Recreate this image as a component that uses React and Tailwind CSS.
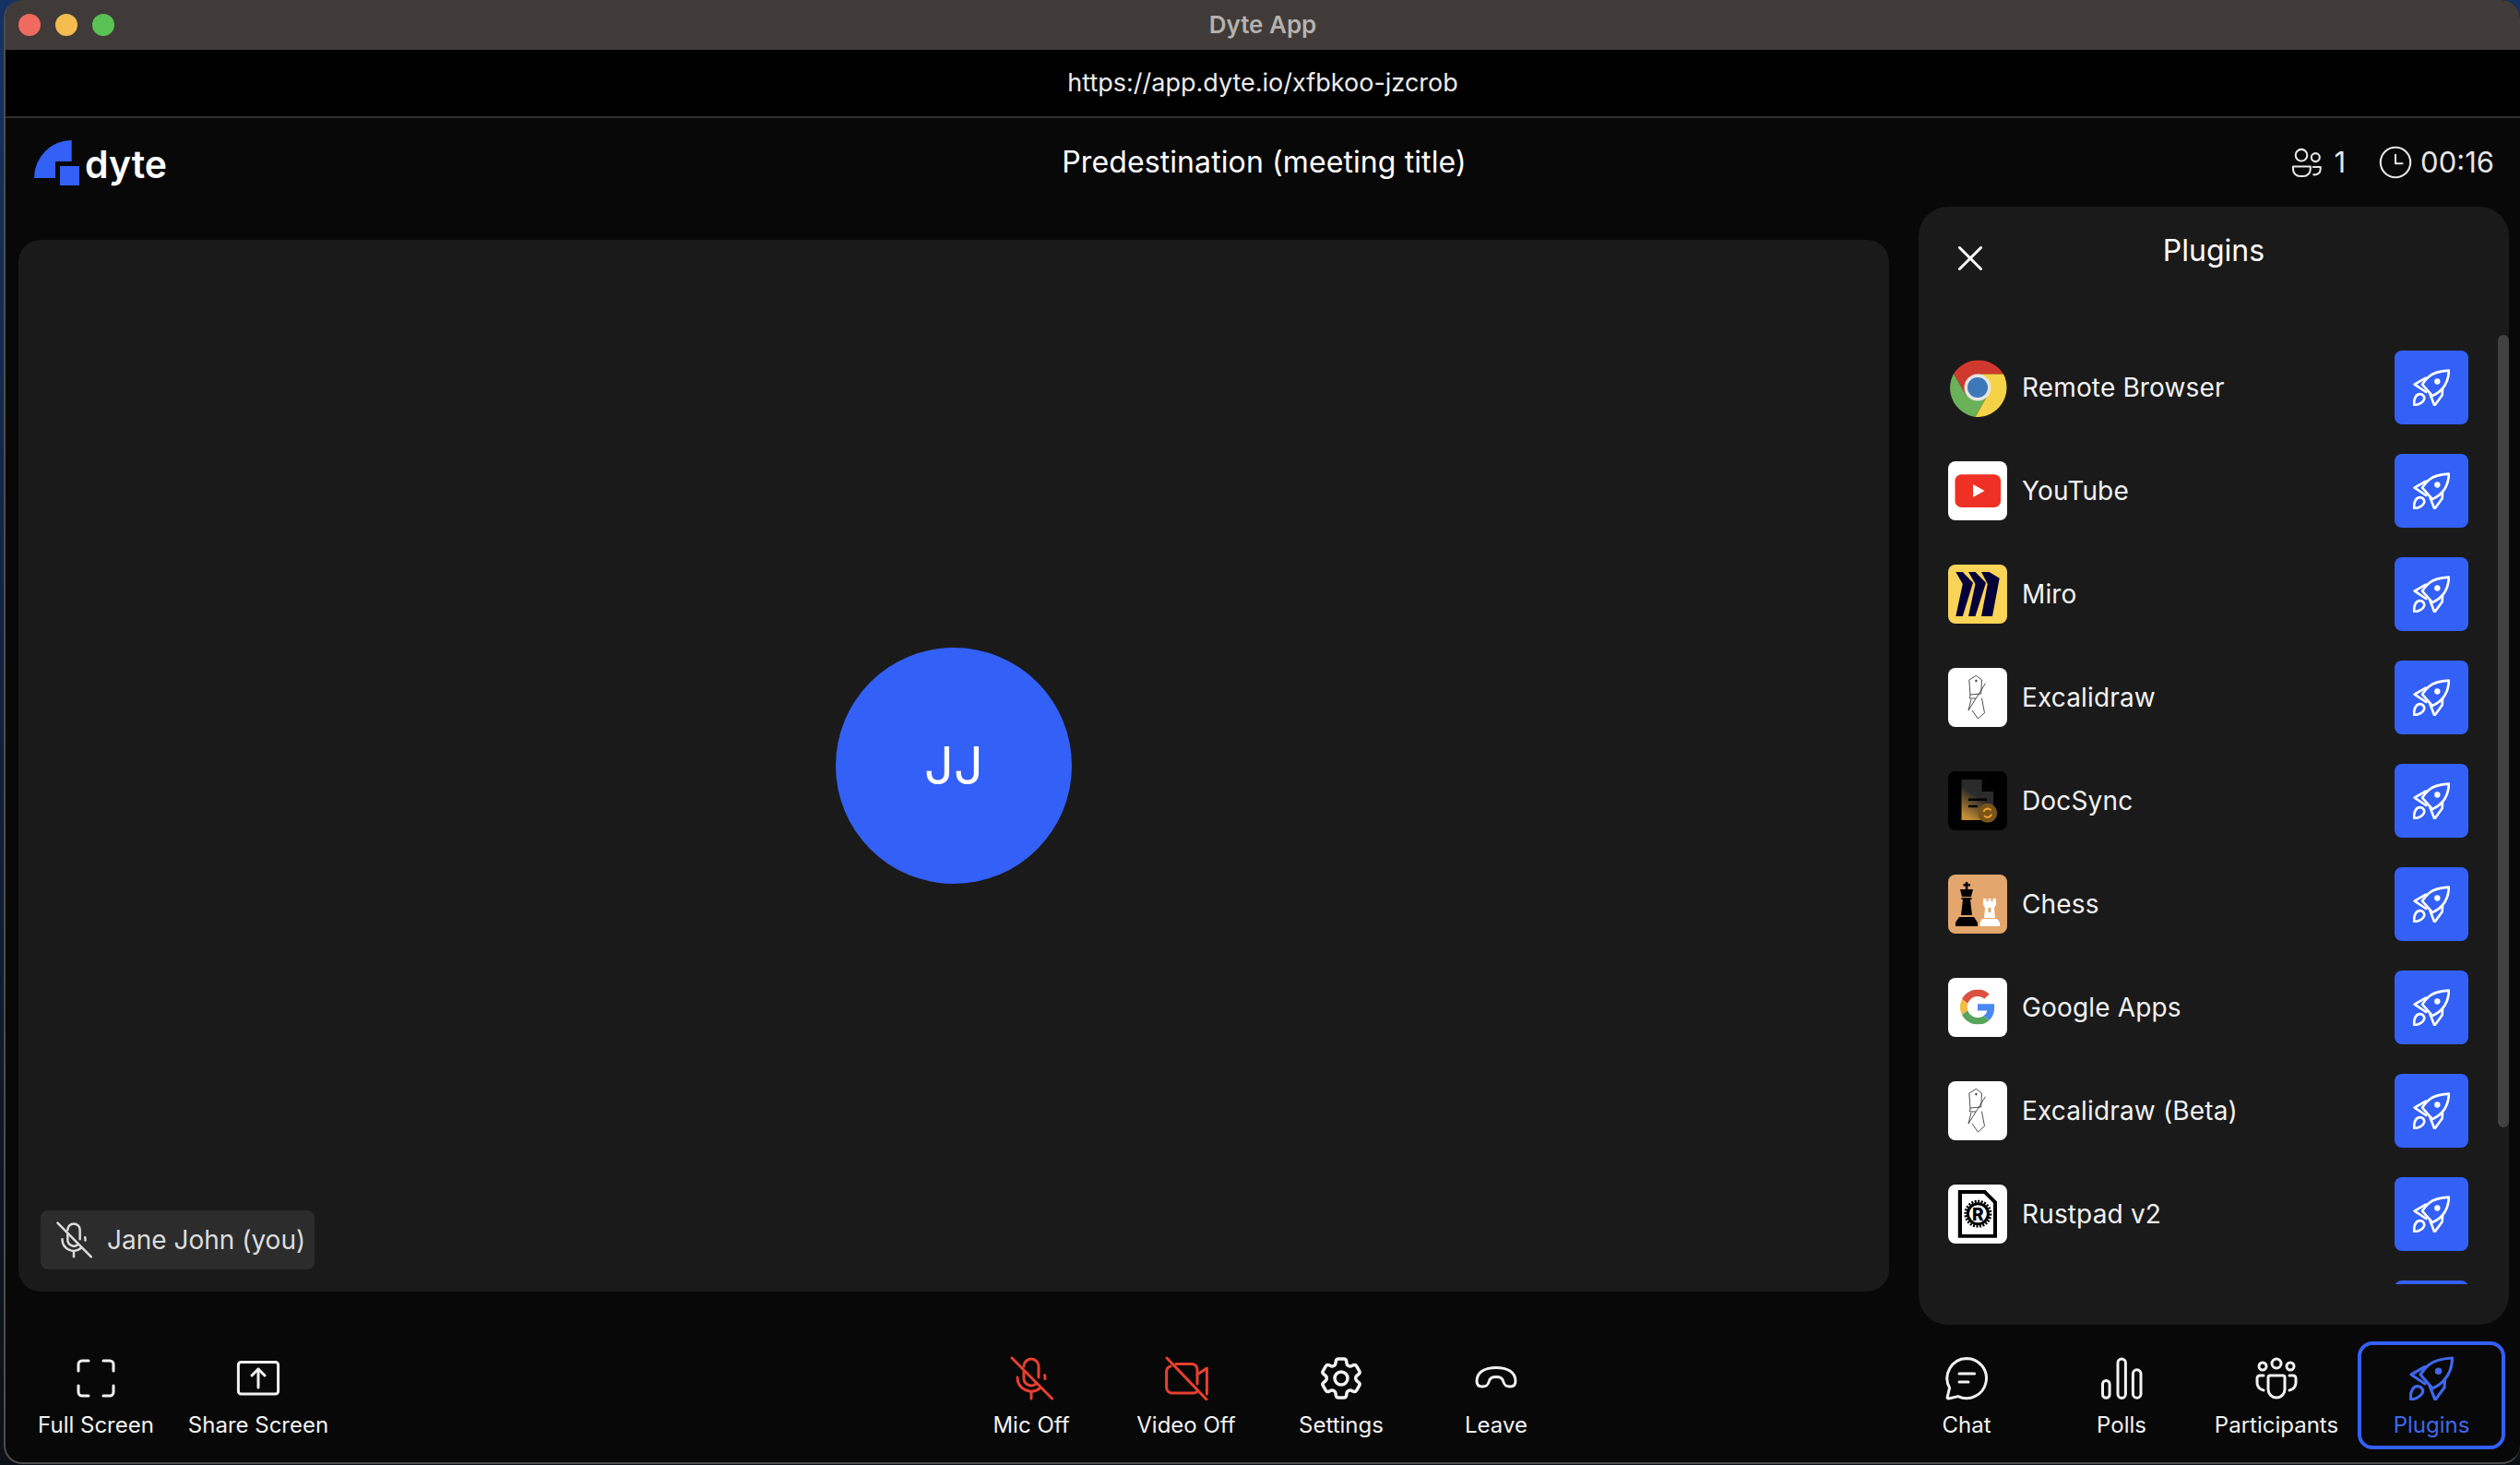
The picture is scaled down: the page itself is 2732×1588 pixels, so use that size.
import { HiOutlineCog6Tooth } from "react-icons/hi2";

const Icon = ({ children, size = 48, sw = 1.5, className = "" }) => (
  <svg
    width={size}
    height={size}
    viewBox="0 0 24 24"
    fill="none"
    stroke="currentColor"
    strokeWidth={sw}
    strokeLinecap="round"
    strokeLinejoin="round"
    className={`shrink-0 ${className}`}
  >
    {children}
  </svg>
);

const Rocket = ({ size = 48 }) => (
  <Icon size={size} sw={1.6}>
    <path d="M23.300 1C18 1.300 13.500 2.300 10.500 4.800C8.500 6.500 7 8.500 6 10L12.600 17.500C15 16.300 17.500 14.800 19 12.800C22 9.500 23.200 5.500 23.300 1Z" />
    <path d="M8.300 5.800L1 10L8.500 15" />
    <path d="M19.200 13L19 17L14 23.800L11 16" />
    <path d="M0.800 23.500C0.300 19.500 2 16.300 4.500 16.300C6.300 16.300 7.800 18 7.200 19.800C6.300 21.800 3.500 23.200 0.800 23.500Z" />
    <circle cx="15.800" cy="8.100" r="1.900" fill="currentColor" stroke="none" />
  </Icon>
);

const MicOff = ({ size = 48 }) => (
  <Icon size={size}>
    <path d="M8 5.500a4 4 0 0 1 8 0V11.500" />
    <path d="M8 8V12a4 4 0 0 0 6.500 3.100" />
    <path d="M4.500 11.500a7.500 7.500 0 0 0 12.300 5.800" />
    <path d="M19.500 12.300a7.500 7.500 0 0 0-.2-2" />
    <path d="M12 19.500V23" />
    <path d="M1.500 1L23.300 23" />
  </Icon>
);

const VideoOff = () => (
  <Icon>
    <path d="M3.500 5.500A3 3 0 0 0 1.300 8.300V17A3 3 0 0 0 4.300 20H16A2.500 2.500 0 0 0 17.800 19.300" />
    <path d="M6.500 4.200H15A3 3 0 0 1 18 7.200V15" />
    <path d="M18 10L23.200 6.500V20.500" />
    <path d="M1.500 1L23 23.500" />
  </Icon>
);

const FullScreen = () => (
  <Icon>
    <path d="M8 2.500H4.500a2 2 0 0 0-2 2V8" />
    <path d="M16 2.500h3.500a2 2 0 0 1 2 2V8" />
    <path d="M2.500 16v3.500a2 2 0 0 0 2 2H8" />
    <path d="M21.500 16v3.500a2 2 0 0 1-2 2H16" />
  </Icon>
);

const ShareScreen = () => (
  <Icon>
    <rect x="1.200" y="3.200" width="21.600" height="17.300" rx="1.500" />
    <path d="M12 17V7" />
    <path d="M8.500 10.500L12 7l3.500 3.500" />
  </Icon>
);

const Leave = () => (
  <Icon>
    <path d="M1.500 13.500C1.500 8.500 6 6.200 12 6.200S22.500 8.500 22.500 13.500C22.500 15.500 21.500 16.500 19.500 16.500C17 16.500 16.300 15.500 15.800 13.500C15.500 12 14.500 11.200 12 11.200S8.500 12 8.200 13.500C7.700 15.500 7 16.500 4.500 16.500C2.500 16.500 1.500 15.500 1.500 13.500Z" />
  </Icon>
);

const Chat = () => (
  <Icon>
    <path d="M12 1.200a10.800 10.800 0 1 1-4.600 20.600L2.300 23a.6.6 0 0 1-.7-.8L2.800 17.200A10.800 10.800 0 0 1 12 1.200Z" />
    <path d="M8 9.500h8.300" />
    <path d="M8 14h5" />
  </Icon>
);

const Polls = () => (
  <Icon>
    <rect x="1.750" y="13.200" width="3.800" height="9.400" rx="1.900" />
    <rect x="10" y="1.500" width="4.200" height="21.200" rx="2.100" />
    <rect x="18.200" y="7.400" width="4.300" height="15.200" rx="2.150" />
  </Icon>
);

const Participants = () => (
  <Icon>
    <circle cx="12" cy="4" r="2.500" />
    <circle cx="4.500" cy="5.500" r="2" />
    <circle cx="19.500" cy="5.500" r="2" />
    <path d="M8.500 10.500h7a1 1 0 0 1 1 1V18a4.500 4.500 0 0 1-9 0V11.500a1 1 0 0 1 1-1Z" />
    <path d="M5 10.500H3a1.500 1.500 0 0 0-1.500 1.500v2.500a4 4 0 0 0 3.500 4" />
    <path d="M19 10.500h2a1.500 1.500 0 0 1 1.500 1.500v2.500a4 4 0 0 1-3.500 4" />
  </Icon>
);

const People = () => (
  <Icon size={36} sw={1.4}>
    <circle cx="8" cy="6.800" r="4.200" />
    <circle cx="18.200" cy="8.400" r="3" />
    <path d="M2 15H14.500V17a5 5 0 0 1-5 5H7a5 5 0 0 1-5-5Z" />
    <path d="M16.500 15.300H21.800V17a4 4 0 0 1-5 3.800" />
  </Icon>
);

const Clock = () => (
  <Icon size={36} sw={1.4}>
    <circle cx="12" cy="12" r="10.800" />
    <path d="M12 6.500V12.800H17" />
  </Icon>
);

const DyteMark = () => (
  <svg width="49" height="49" viewBox="0 0 49 49" className="shrink-0">
    <path d="M0 41A40.700 41 0 0 1 40.700 0V23H23V41Z" fill="#3360f6" />
    <path d="M28 28h21v21H28Z" fill="#3360f6" />
  </svg>
);

const Tile = ({ bg, children }) => (
  <div className={`h-16 w-16 shrink-0 overflow-hidden rounded-lg ${bg}`}>
    <svg width="64" height="64" viewBox="0 0 64 64">
      {children}
    </svg>
  </div>
);

const ChromeLogo = () => (
  <svg width="64" height="64" viewBox="0 0 64 64" className="shrink-0">
    <path d="M6 17A32 32 0 0 1 60 17.500L32 17.500L32 32L19.500 40.500Z" fill="#d2392e" />
    <path d="M6 17A32 32 0 0 0 29.600 64L43 40L32 32L19.500 40.500Z" fill="#6bb158" />
    <path d="M60 17.500A32 32 0 0 1 29.600 64L43 40L32 32L32 17.500Z" fill="#f6d246" />
    <circle cx="32" cy="32" r="14.500" fill="#e6e6e6" />
    <circle cx="32" cy="32" r="11" fill="#3d79b9" />
  </svg>
);

const YouTubeLogo = () => (
  <Tile bg="bg-white">
    <rect x="7.500" y="14.300" width="49.500" height="35.700" rx="7" fill="#ee3124" />
    <path d="M27 25L39.500 32L27 39Z" fill="#fff" />
  </Tile>
);

const MiroLogo = () => (
  <Tile bg="bg-[#fad457]">
    <path d="M8.300 8H15.800L27 19.700L15.800 56H8.300L15.800 21Z" fill="#050038" />
    <path d="M22 8H29.500L41 19.700L29.500 56H22L29.500 21Z" fill="#050038" />
    <path d="M36 8H44.500L55.700 14.700L48 56H36L42.800 21Z" fill="#050038" />
  </Tile>
);

const ExcalidrawLogo = () => (
  <Tile bg="bg-white">
    <g fill="none" stroke="#222" strokeWidth="0.8" strokeLinejoin="round">
      <path d="M30.400 8.300L36.500 13L35.700 28L24 29L22.800 13Z" />
      <path d="M40.500 16.700L22 46" />
      <path d="M24 29L23.500 33H30" />
      <path d="M26 46L32.400 55L39.500 48.700L36.500 32.700" />
      <path d="M25 34L22 46" />
      <circle cx="30.400" cy="14" r="0.800" fill="#222" />
    </g>
  </Tile>
);

const DocSyncLogo = () => (
  <Tile bg="bg-black">
    <defs>
      <linearGradient id="docfade" x1="0.800" y1="0" x2="0.300" y2="1">
        <stop offset="0.450" stopColor="#2b2b2b" />
        <stop offset="1" stopColor="#c48d33" />
      </linearGradient>
    </defs>
    <path d="M14.500 9H36.600L49 22V53H14.500Z" fill="url(#docfade)" />
    <path d="M36.600 9L49 22H36.600Z" fill="#000" />
    <path d="M22 30.700H42M22 38H32" stroke="#000" strokeWidth="2.500" />
    <circle cx="42.800" cy="45.300" r="10.500" fill="#7a5518" />
    <path d="M38.500 44a4.500 4.500 0 0 1 8-1.500M47 46.500a4.500 4.500 0 0 1-8 1.500" fill="none" stroke="#f0a030" strokeWidth="2" />
  </Tile>
);

const ChessLogo = () => (
  <Tile bg="bg-[#e3a66d]">
    <g fill="#000">
      <rect x="18.800" y="8" width="2.500" height="8" />
      <rect x="16.500" y="10" width="7.500" height="2.500" />
      <path d="M13 16H27L25 24H15Z" />
      <rect x="14.500" y="25" width="11" height="2" />
      <path d="M16 27H24L26 44H14Z" />
      <path d="M12 46H28L32 52V56H8V52Z" />
    </g>
    <g fill="#fff">
      <path d="M38 26H41.500V29H43.500V26H46.500V29H48.500V26H52V33L50 36H40L38 33Z" />
      <path d="M40 36H50L51 47H39Z" />
      <path d="M37 48H53L56 52V56H34.500V52Z" />
    </g>
    <rect x="43.500" y="36" width="3" height="5" fill="#e3a66d" />
  </Tile>
);

const GoogleLogo = () => (
  <Tile bg="bg-white">
    <svg x="13" y="12.500" width="38" height="38" viewBox="0 0 48 48">
      <path fill="#dc5140" d="M24 9.500c3.540 0 6.710 1.220 9.210 3.600l6.850-6.850C35.900 2.380 30.470 0 24 0 14.620 0 6.510 5.380 2.560 13.220l7.980 6.190C12.430 13.720 17.740 9.500 24 9.500z" />
      <path fill="#4a89f3" d="M46.980 24.550c0-1.570-.15-3.090-.38-4.550H24v9.020h12.940c-.58 2.960-2.260 5.480-4.780 7.180l7.730 6c4.510-4.180 7.090-10.360 7.090-17.650z" />
      <path fill="#f2bd42" d="M10.530 28.590c-.5-1.450-.78-2.990-.78-4.590s.27-3.140.78-4.590l-7.980-6.190C.92 16.460 0 20.120 0 24c0 3.880.92 7.540 2.560 10.780l7.970-6.190z" />
      <path fill="#58a55c" d="M24 48c6.480 0 11.930-2.130 15.890-5.810l-7.730-6c-2.150 1.450-4.920 2.300-8.160 2.300-6.260 0-11.570-4.220-13.470-9.910l-7.980 6.190C6.510 42.620 14.620 48 24 48z" />
    </svg>
  </Tile>
);

const RustpadLogo = () => (
  <Tile bg="bg-white">
    <path d="M10.800 6H41L53 18V57.700H10.800Z" fill="#000" />
    <path d="M15 10H39L49 20V54H15Z" fill="#fff" />
    <path d="M41 6L53 18" stroke="#fff" strokeWidth="1" />
    <circle cx="32.400" cy="31.700" r="13.500" fill="none" stroke="#000" strokeWidth="3" strokeDasharray="2 1.500" />
    <circle cx="32.400" cy="31.700" r="12.500" fill="#000" />
    <circle cx="32.400" cy="31.700" r="9.500" fill="#fff" />
    <text x="32.400" y="38.500" textAnchor="middle" fontSize="19" fontWeight="800" fill="#000" fontFamily="Inter, sans-serif">
      R
    </text>
  </Tile>
);

const PLUGINS = [
  { name: "Remote Browser", logo: ChromeLogo },
  { name: "YouTube", logo: YouTubeLogo },
  { name: "Miro", logo: MiroLogo },
  { name: "Excalidraw", logo: ExcalidrawLogo },
  { name: "DocSync", logo: DocSyncLogo },
  { name: "Chess", logo: ChessLogo },
  { name: "Google Apps", logo: GoogleLogo },
  { name: "Excalidraw (Beta)", logo: ExcalidrawLogo },
  { name: "Rustpad v2", logo: RustpadLogo },
  { name: "", logo: null },
];

const ControlButton = ({ label, icon, className = "text-[#f2f2f2]", active = false }) => (
  <button
    className={`flex h-[117px] w-40 flex-col items-center gap-[11px] rounded-2xl ${
      active ? "border-4 border-[#3360f6] pt-3 text-[#3f68ee]" : `pt-4 ${className}`
    }`}
  >
    <span className="flex h-12 w-12 items-center justify-center">{icon}</span>
    <span className={`text-2xl leading-8 ${active ? "text-[#3f68ee]" : "text-[#f2f2f2]"}`}>{label}</span>
  </button>
);

export default function App() {
  return (
    <div className="h-[1588px] w-[2732px] overflow-hidden bg-linear-to-b from-[#163263] via-[#10203c] to-[#0c1118] pl-1 font-['Inter',sans-serif] text-white">
      <div className="flex h-[1587px] flex-col overflow-hidden rounded-[20px] border-b-2 border-l-2 border-[#4c4c4c] bg-[#080808]">
        {/* Title bar */}
        <div className="grid h-[54px] shrink-0 grid-cols-[1fr_auto_1fr] items-center bg-[#403b39] px-3.5">
          <div className="flex gap-4">
            <span className="h-6 w-6 rounded-full bg-[#ef6a5f]" />
            <span className="h-6 w-6 rounded-full bg-[#f5bd4f]" />
            <span className="h-6 w-6 rounded-full bg-[#5ac254]" />
          </div>
          <span className="-mt-0.5 text-[26px] font-semibold text-[#b5b1ae]">Dyte App</span>
        </div>

        {/* Url bar */}
        <div className="flex h-[74px] shrink-0 items-center justify-center border-b-2 border-[#2e2e2e] bg-black text-[27px] text-[#ececec]">
          https://app.dyte.io/xfbkoo-jzcrob
        </div>

        {/* Meeting header */}
        <div className="grid h-24 shrink-0 grid-cols-[1fr_auto_1fr] items-center pl-[31px] pr-7">
          <div className="flex items-center gap-1.5">
            <DyteMark />
            <span className="mt-1 text-[41px] leading-none font-semibold">dyte</span>
          </div>
          <span className="text-[32px] tracking-[0.1px]">Predestination (meeting title)</span>
          <div className="flex items-center justify-end text-[31px] text-[#e6e6e6]">
            <People />
            <span className="ml-3">1</span>
            <span className="ml-9">
              <Clock />
            </span>
            <span className="ml-[9px]">00:16</span>
          </div>
        </div>

        {/* Stage + side panel */}
        <div className="flex min-h-0 flex-1 pl-3.5 pr-3">
          <div className="relative mb-10 mr-8 mt-9 flex flex-1 items-center justify-center rounded-3xl bg-[#1a1a1a]">
            <div className="flex h-64 w-64 items-center justify-center rounded-full bg-[#3360f6] text-[56px]">JJ</div>
            <div className="absolute bottom-[24px] left-6 flex h-16 items-center gap-4 rounded-lg bg-[#2c2c2c] pl-4 pr-2.5 text-[28px] text-[#dcdcdc]">
              <MicOff size={40} />
              <span>Jane John (you)</span>
            </div>
          </div>

          <div className="mb-1 flex w-[640px] shrink-0 flex-col rounded-[32px] bg-[#1a1a1a]">
            <div className="grid h-[128px] shrink-0 grid-cols-[1fr_auto_1fr]">
              <div className="pl-[43px] pt-[43px]">
                <svg width="26" height="26" viewBox="0 0 26 26" stroke="currentColor" strokeWidth="3" strokeLinecap="round">
                  <path d="M1.500 1.500L24.500 24.500M24.500 1.500L1.500 24.500" />
                </svg>
              </div>
              <span className="pt-[28px] text-[32px] leading-10">Plugins</span>
            </div>
            <div className="relative mb-11 min-h-0 flex-1 overflow-hidden">
              <div className="flex flex-col gap-8 pb-6 pl-8 pr-11 pt-7">
                {PLUGINS.map((plugin, i) => (
                  <div key={i} className="flex h-20 shrink-0 items-center gap-4">
                    {plugin.logo && <plugin.logo />}
                    {plugin.name && <span className="text-[28px] tracking-[0.15px] text-[#f2f2f2]">{plugin.name}</span>}
                    <button className="ml-auto flex h-20 w-20 shrink-0 items-center justify-center rounded-lg bg-[#3360f6] text-white">
                      <Rocket size={40} />
                    </button>
                  </div>
                ))}
              </div>
              <div className="absolute right-0 top-[11px] h-[859px] w-3 rounded-full bg-[#414141]" />
            </div>
          </div>
        </div>

        {/* Control bar */}
        <div className="flex h-[145px] shrink-0 items-start pl-[18px] pr-4 pt-3.5">
          <div className="flex flex-1 gap-4">
            <ControlButton label="Full Screen" icon={<FullScreen />} />
            <ControlButton label="Share Screen" icon={<ShareScreen />} />
          </div>
          <div className="flex gap-2">
            <ControlButton label="Mic Off" className="text-[#e8402f]" icon={<MicOff />} />
            <ControlButton label="Video Off" className="text-[#e8402f]" icon={<VideoOff />} />
            <ControlButton label="Settings" icon={<HiOutlineCog6Tooth size={56} strokeWidth={1.5} className="shrink-0" />} />
            <ControlButton label="Leave" icon={<Leave />} />
          </div>
          <div className="flex flex-1 justify-end gap-2">
            <ControlButton label="Chat" icon={<Chat />} />
            <ControlButton label="Polls" icon={<Polls />} />
            <ControlButton label="Participants" icon={<Participants />} />
            <ControlButton label="Plugins" active icon={<Rocket />} />
          </div>
        </div>
      </div>
    </div>
  );
}
